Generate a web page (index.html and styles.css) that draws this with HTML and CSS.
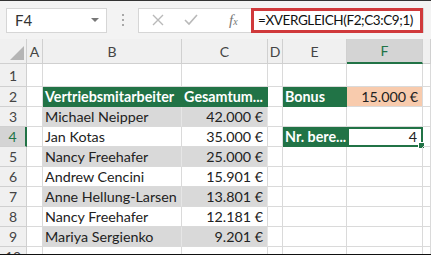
FILE: index.html
```html
<!DOCTYPE html>
<html lang="de">
<head>
    <meta charset="UTF-8">
    <title>XVERGLEICH</title>
    <link rel="stylesheet" href="styles.css">
</head>
<body>

    <div class="toolbar">
        <div class="name-box">
            <span>F4</span>
            <span class="caret"></span>
        </div>
        <div class="grip"><i></i><i></i><i></i></div>
        <div class="formula-box">
            <svg class="btn" width="14" height="14" viewBox="0 0 14 14"><path d="M2 2 L12 12 M12 2 L2 12" stroke="#b9b9b9" stroke-width="1.4" fill="none"/></svg>
            <svg class="btn" width="16" height="14" viewBox="0 0 16 14"><path d="M2 7 L6 11 L14 2" stroke="#b9b9b9" stroke-width="1.6" fill="none"/></svg>
            <span class="fx">f<small>x</small></span>
            <div class="formula">=XVERGLEICH(F2;C3:C9;1)</div>
        </div>
    </div>

    <div class="sheet">
        <!-- Spaltenköpfe -->
        <div class="corner"><svg width="14" height="14" viewBox="0 0 14 14"><path d="M14 0 L14 14 L0 14 Z" fill="#b5b5b5"/></svg></div>
        <div class="col-head">A</div>
        <div class="col-head">B</div>
        <div class="col-head">C</div>
        <div class="col-head">D</div>
        <div class="col-head">E</div>
        <div class="col-head active">F</div>
        <div class="col-head"></div>

        <!-- Zeile 1 -->
        <div class="row-head">1</div>
        <div class="cell"></div><div class="cell"></div><div class="cell"></div>
        <div class="cell"></div><div class="cell"></div><div class="cell"></div><div class="cell"></div>

        <!-- Zeile 2 -->
        <div class="row-head">2</div>
        <div class="cell"></div>
        <div class="cell head first">Vertriebsmitarbeiter</div>
        <div class="cell head num">Gesamtum...</div>
        <div class="cell"></div>
        <div class="cell head">Bonus</div>
        <div class="cell bonus num">15.000 €</div>
        <div class="cell"></div>

        <!-- Zeile 3 -->
        <div class="row-head">3</div>
        <div class="cell"></div>
        <div class="cell shade">Michael Neipper</div>
        <div class="cell shade num">42.000 €</div>
        <div class="cell"></div><div class="cell"></div><div class="cell"></div><div class="cell"></div>

        <!-- Zeile 4 -->
        <div class="row-head active">4</div>
        <div class="cell"></div>
        <div class="cell">Jan Kotas</div>
        <div class="cell num">35.000 €</div>
        <div class="cell"></div>
        <div class="cell head">Nr. bere...</div>
        <div class="cell num selected">4<span class="handle"></span></div>
        <div class="cell"></div>

        <!-- Zeile 5 -->
        <div class="row-head">5</div>
        <div class="cell"></div>
        <div class="cell shade">Nancy Freehafer</div>
        <div class="cell shade num">25.000 €</div>
        <div class="cell"></div><div class="cell"></div><div class="cell"></div><div class="cell"></div>

        <!-- Zeile 6 -->
        <div class="row-head">6</div>
        <div class="cell"></div>
        <div class="cell">Andrew Cencini</div>
        <div class="cell num">15.901 €</div>
        <div class="cell"></div><div class="cell"></div><div class="cell"></div><div class="cell"></div>

        <!-- Zeile 7 -->
        <div class="row-head">7</div>
        <div class="cell"></div>
        <div class="cell shade">Anne Hellung-Larsen</div>
        <div class="cell shade num">13.801 €</div>
        <div class="cell"></div><div class="cell"></div><div class="cell"></div><div class="cell"></div>

        <!-- Zeile 8 -->
        <div class="row-head">8</div>
        <div class="cell"></div>
        <div class="cell">Nancy Freehafer</div>
        <div class="cell num">12.181 €</div>
        <div class="cell"></div><div class="cell"></div><div class="cell"></div><div class="cell"></div>

        <!-- Zeile 9 -->
        <div class="row-head">9</div>
        <div class="cell"></div>
        <div class="cell shade">Mariya Sergienko</div>
        <div class="cell shade num">9.201 €</div>
        <div class="cell"></div><div class="cell"></div><div class="cell"></div><div class="cell"></div>

        <!-- Zeile 10 -->
        <div class="row-head">10</div>
        <div class="cell"></div><div class="cell"></div><div class="cell"></div>
        <div class="cell"></div><div class="cell"></div><div class="cell"></div><div class="cell"></div>
    </div>

</body>
</html>
```

FILE: styles.css
```css
html, body {
    margin: 0;
    width: 431px;
    height: 255px;
    overflow: hidden;
}

body {
    font-family: 'Lato', 'Noto Sans', sans-serif;
    background-color: #ffffff;
    color: #222;
    box-sizing: border-box;
    border-top: 1px solid #333;
    border-bottom: 1px solid #111;
}

/* Formelleiste */
.toolbar {
    height: 38px;
    background-color: #f3f3f3;
    display: flex;
    align-items: center;
    padding-left: 6px;
}

.name-box {
    width: 101px;
    height: 25px;
    box-sizing: border-box;
    background-color: white;
    border: 1px solid #d6d6d6;
    display: flex;
    align-items: center;
    justify-content: space-between;
    padding: 0 7px 0 8px;
    font-size: 15px;
    color: #333;
}

.caret {
    width: 0;
    height: 0;
    border-left: 4px solid transparent;
    border-right: 4px solid transparent;
    border-top: 4px solid #777;
}

.grip {
    width: 31px;
    display: flex;
    flex-direction: column;
    align-items: center;
    gap: 3px;
}

.grip i {
    width: 2px;
    height: 2px;
    background-color: #a8a8a8;
}

.formula-box {
    width: 286px;
    height: 25px;
    box-sizing: border-box;
    background-color: white;
    border: 1px solid #d6d6d6;
    display: flex;
    align-items: center;
}

.btn {
    margin-left: 12px;
    margin-right: 8px;
}

.btn + .btn {
    margin-left: 10px;
}

.fx {
    font-family: 'Liberation Serif', serif;
    font-style: italic;
    font-size: 15px;
    color: #777;
    margin-left: 22px;
    width: 20px;
}

.fx small {
    font-size: 10px;
}

.formula {
    margin-left: auto;
    width: 172px;
    height: 25px;
    box-sizing: border-box;
    border: 3px solid #d0393b;
    margin-top: -1px;
    margin-bottom: -1px;
    font-size: 13.5px;
    letter-spacing: -0.4px;
    line-height: 19px;
    padding-left: 4px;
    color: #111;
    white-space: nowrap;
}

/* Tabellenblatt */
.sheet {
    display: grid;
    grid-template-columns: 27px 16px 139px 86px 15px 64px 76px 1fr;
    grid-template-rows: 25px 23px repeat(9, 20px);
}

.corner, .col-head, .row-head {
    background-color: #f0f0f0;
    border-right: 1px solid #d0d0d0;
    border-bottom: 1px solid #d0d0d0;
    color: #444;
    font-size: 14px;
    display: flex;
    align-items: center;
    justify-content: center;
    box-sizing: border-box;
}

.corner {
    align-items: flex-end;
    justify-content: flex-end;
    padding: 0 2px 3px 0;
}

.col-head.active {
    background-color: #d4d4d4;
    color: #217346;
    border-bottom: 2px solid #217346;
}

.row-head.active {
    background-color: #d4d4d4;
    color: #217346;
    border-right: 2px solid #217346;
}

.cell {
    border-right: 1px solid #dadada;
    border-bottom: 1px solid #dadada;
    box-sizing: border-box;
    font-size: 14.3px;
    line-height: 19px;
    padding: 0 4px 0 2px;
    white-space: nowrap;
    overflow: hidden;
    position: relative;
}

.cell.num {
    text-align: right;
}

.cell.shade {
    background-color: #d9d9d9;
    border-right-color: #e6e6e6;
}

.cell.head {
    background-color: #217346;
    border-color: #217346;
    color: white;
    font-weight: bold;
}

.cell.bonus {
    background-color: #f8cbad;
}

.cell.selected {
    border: 2px solid #217346;
    overflow: visible;
    line-height: 16px;
}

.handle {
    position: absolute;
    right: -4px;
    bottom: -4px;
    width: 5px;
    height: 5px;
    background-color: #217346;
    border: 1px solid white;
}
```
